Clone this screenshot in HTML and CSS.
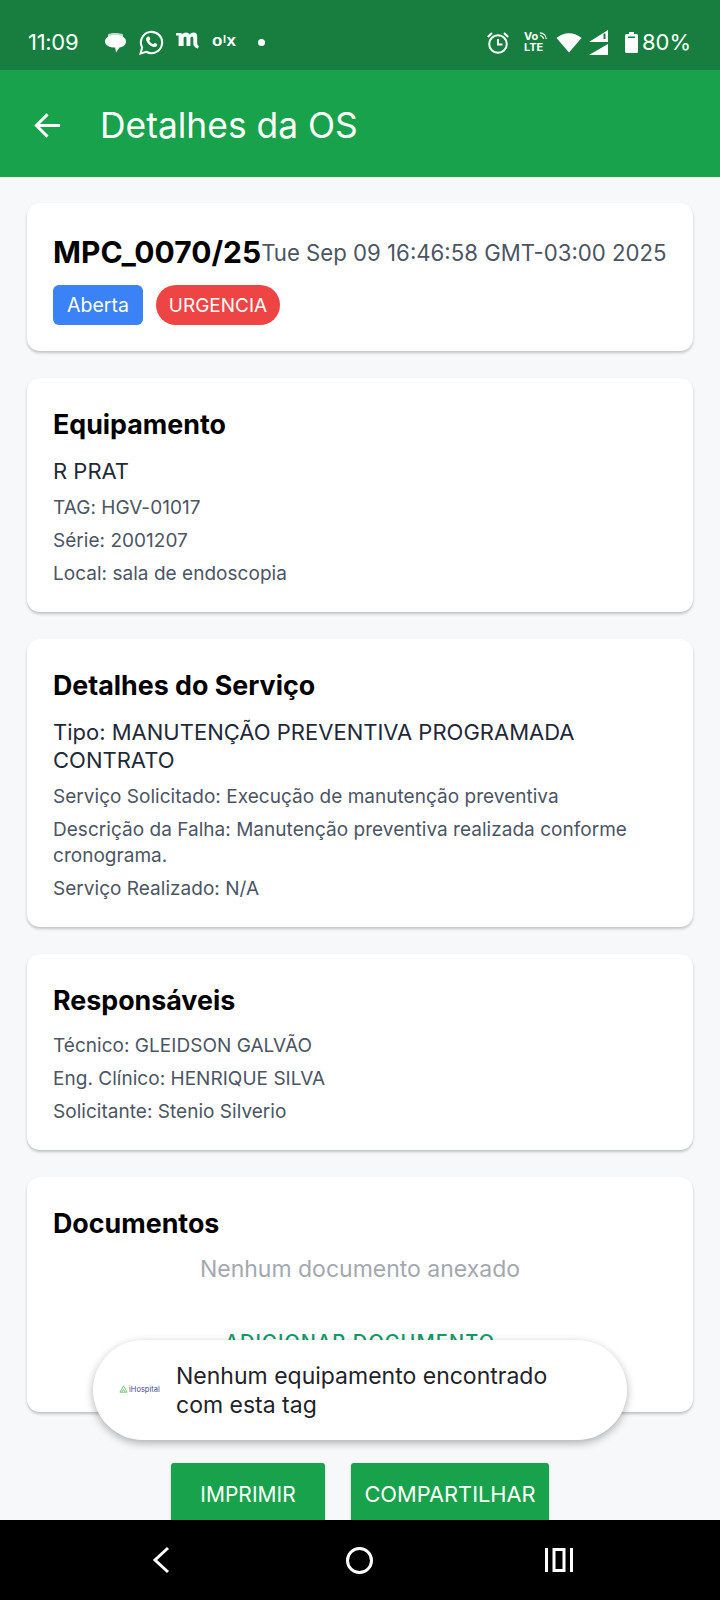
FILE: index.html
```html
<!DOCTYPE html>
<html lang="pt-BR">
<head>
<meta charset="utf-8">
<title>Detalhes da OS</title>
<link rel="stylesheet" href="styles.css">
</head>
<body>
<div class="screen">
  <div class="status">
    <span class="time">11:09</span>
    <div class="notifs">
      <svg class="bubble" viewBox="0 0 21 21"><path fill="#fff" opacity=".75" d="M3 2.500C5 .5 15 .5 18 2.500V5H3z"/><path fill="#fff" d="M10.500 3C16.500 3 21 5.500 21 9.500c0 3.500-3 5.500-6.500 6L11 20.500l-.8-5C5 15.500 0 13.500 0 9.500 0 5.500 4.500 3 10.500 3z"/></svg>
      <svg class="wa" viewBox="0 0 24 24"><path fill="none" stroke="#fff" stroke-width="2" d="M1.500 22.500l1.500-5.700A10.200 10.200 0 1 1 7 20.900z"/><path fill="#fff" d="M8.300 6.500c.5-.5 1.300-.5 1.600 0l.9 2c.1.400-.5 1.200-.9 1.700.9 1.600 2.100 2.800 3.800 3.500.4-.4 1.200-1.400 1.600-1.300l2 1c.4.300.2 1.500-.2 2-.9 1-2.300 1.200-3.900.6-3-1.100-5-3.200-6.100-5.800-.5-1.400-.1-2.800.9-3.700z"/></svg>
      <svg class="mlogo" viewBox="0 0 24 18"><path fill="#fff" d="M1 2h5.500v1.500C7.500 2.500 9.500 1.500 11 1.500c1.700 0 3 .8 3.600 2 1-1.300 2.600-2 4-2 2.500 0 3.600 1.500 3.600 4V12c0 1.500.4 2.500 1.600 3.200L23 17.500c-2.700-.5-4.700-2.200-4.700-5V7.300c0-1-.4-1.600-1.400-1.600s-1.500.6-1.500 1.600V15H11.500V7.300c0-1-.4-1.600-1.400-1.600S8.600 6.300 8.600 7.300V15H3.600V4.500L1 4.500z"/></svg>
      <span class="olx">o<small>l</small>x</span>
      <span class="dot"></span>
    </div>
    <div class="sys">
      <svg class="alarm" viewBox="0 0 22 23"><circle cx="11" cy="13" r="8.800" fill="none" stroke="#fff" stroke-width="2"/><path fill="none" stroke="#fff" stroke-width="2" d="M11 8V13.500H15.500M.8 6L5 2M21.200 6L17 2"/></svg>
      <span class="volte"><span>Vo<svg class="volte-w" viewBox="0 0 10 10"><path fill="none" stroke="#fff" stroke-width="1.300" d="M1 2c4 0 7 3 7 7M1 5c2 0 4 2 4 4"/></svg></span><span>LTE</span></span>
      <svg class="wifi" viewBox="0 0 26 22"><path fill="#fff" d="M13 21.500L.5 7C7.500.5 18.500.5 25.500 7z"/></svg>
      <svg class="signal" viewBox="0 0 19 25"><path fill="#fff" fill-rule="evenodd" d="M0 12L19 0V12zM14.500 3.500V9H16.500V3.500z"/><path fill="#fff" d="M0 25L19 14V25z"/></svg>
      <svg class="batt" viewBox="0 0 13 21"><path fill="#fff" fill-rule="evenodd" d="M4 0h5v2h2.500A1.500 1.500 0 0 1 13 3.500V19.500A1.500 1.500 0 0 1 11.500 21H1.500A1.500 1.500 0 0 1 0 19.500V3.500A1.500 1.500 0 0 1 1.500 2H4zM3 4.500v1.500h7V4.500z"/></svg>
      <span class="pct">80%</span>
    </div>
  </div>
  <header class="appbar">
    <svg class="back" viewBox="0 0 30 30"><path fill="none" stroke="#fff" stroke-width="3" d="M28 15H4M15 3.500L3.500 15 15 26.500"/></svg>
    <h1>Detalhes da OS</h1>
  </header>
  <main class="content">
    <section class="card">
      <div class="head-row">
        <span class="os">MPC_0070/25</span>
        <span class="date">Tue Sep 09 16:46:58 GMT-03:00 2025</span>
      </div>
      <div class="badges">
        <span class="badge blue">Aberta</span>
        <span class="badge red">URGENCIA</span>
      </div>
    </section>
    <section class="card">
      <h2>Equipamento</h2>
      <p class="lead">R PRAT</p>
      <p class="meta">TAG: HGV-01017</p>
      <p class="meta">Série: 2001207</p>
      <p class="meta">Local: sala de endoscopia</p>
    </section>
    <section class="card">
      <h2>Detalhes do Serviço</h2>
      <p class="lead">Tipo: MANUTENÇÃO PREVENTIVA PROGRAMADA CONTRATO</p>
      <p class="meta">Serviço Solicitado: Execução de manutenção preventiva</p>
      <p class="meta">Descrição da Falha: Manutenção preventiva realizada conforme cronograma.</p>
      <p class="meta">Serviço Realizado: N/A</p>
    </section>
    <section class="card">
      <h2>Responsáveis</h2>
      <p class="meta">Técnico: GLEIDSON GALVÃO</p>
      <p class="meta">Eng. Clínico: HENRIQUE SILVA</p>
      <p class="meta">Solicitante: Stenio Silverio</p>
    </section>
    <section class="card docs">
      <h2>Documentos</h2>
      <p class="empty">Nenhum documento anexado</p>
      <p class="add">ADICIONAR DOCUMENTO</p>
    </section>
    <div class="actions">
      <button class="btn print">IMPRIMIR</button>
      <button class="btn share">COMPARTILHAR</button>
    </div>
  </main>
  <nav class="navbar">
    <svg class="nav-back" viewBox="0 0 20 30"><path fill="none" stroke="#fff" stroke-width="3" d="M17 3L4 15l13 12"/></svg>
    <span class="nav-home"></span>
    <svg class="nav-recent" viewBox="0 0 28 26"><path fill="none" stroke="#fff" stroke-width="3" d="M1.500 1v24M26.500 1v24M9 2.500h10v21H9z"/></svg>
  </nav>
  <div class="toast">
    <span class="brand"><svg class="brand-i" viewBox="0 0 10 10"><path fill="none" stroke="#6fbf73" stroke-width="1" d="M5 1L1 8h8zM3 8l2-3 2 3"/></svg><span>iHospital</span></span>
    <span class="toast-text">Nenhum equipamento encontrado com esta tag</span>
  </div>
</div>
</body>
</html>
```
FILE: styles.css
```css
* { box-sizing: border-box; }
html, body { margin: 0; padding: 0; }
body { font-family: Inter, "Liberation Sans", sans-serif; background: #f7f8fa; }
.screen { position: relative; width: 720px; height: 1600px; display: flex; flex-direction: column; overflow: hidden; }
.status { height: 70px; flex: none; background: #177e3f; color: #fff; display: flex; align-items: center; padding: 14px 29px 0 28px; }
.time { font-size: 22px; letter-spacing: -0.3px; width: 77px; }
.notifs { display: flex; align-items: center; gap: 13px; }
.bubble { width: 21px; height: 21px; }
.wa { width: 25px; height: 25px; }
.mlogo { width: 24px; height: 18px; margin: -4px 0 0 -2px; }
.olx { font-family: "Liberation Sans", sans-serif; font-weight: 700; font-size: 17px; letter-spacing: .5px; margin-top: -2px; width: 28px; }
.olx small { font-size: 11px; vertical-align: 3px; }
.dot { width: 7px; height: 7px; background: #fff; border-radius: 50%; margin-left: 5px; }
.sys { margin-left: auto; display: flex; align-items: center; }
.alarm { width: 22px; height: 23px; }
.volte { display: flex; flex-direction: column; font-size: 11px; font-weight: 700; line-height: 11px; margin-left: 15px; width: 32px; }
.volte > span { display: flex; align-items: flex-start; }
.volte-w { width: 9px; height: 9px; margin-left: 1px; }
.wifi { width: 26px; height: 22px; }
.signal { width: 19px; height: 25px; margin-left: 7px; }
.batt { width: 13px; height: 21px; margin-left: 17px; }
.pct { font-size: 22px; margin-left: 4px; }
.appbar { height: 107px; flex: none; background: #18a24b; display: flex; align-items: center; padding: 3px 0 0 33px; }
.back { width: 29px; height: 29px; }
.appbar h1 { margin: 0 0 0 38px; color: #fff; font-size: 35.400px; font-weight: 400; }
.content { flex: 1; min-height: 0; overflow: hidden; padding: 26px 27px 0; display: flex; flex-direction: column; gap: 27px; }
.card { flex: none; background: #fff; border-radius: 13px; padding: 28px 26px 25px; box-shadow: 0 2px 3px rgba(0,0,0,.22); }
.card p { margin: 0; }
.head-row { display: flex; align-items: center; justify-content: space-between; height: 44px; margin-top: -1px; padding-right: 1px; }
.os { font-size: 30px; font-weight: 700; color: #000; white-space: nowrap; }
.date { font-size: 22.200px; color: #4b5563; white-space: nowrap; }
.badges { display: flex; gap: 13px; margin-top: 11px; margin-bottom: 1px; }
.badge { height: 40px; display: flex; align-items: center; color: #fff; font-size: 19px; }
.blue { width: 90px; justify-content: center; background: #3b82f6; border-radius: 6px; font-size: 19.500px; }
.red { width: 124px; justify-content: center; background: #ef4444; border-radius: 20px; }
h2 { margin: 0 0 15px; font-size: 26.800px; line-height: 36px; font-weight: 700; color: #000; }
.lead { font-size: 22px; line-height: 28px; color: #1f2937; }
.card .lead { margin-bottom: 10px; }
.card .meta { font-size: 19px; line-height: 26px; color: #4b5563; margin-bottom: 7px; letter-spacing: .03px; }
.card .meta:last-child { margin-bottom: 0; }
.docs { height: 235px; }
.card .empty { font-size: 23px; line-height: 26px; color: #a3a8b0; text-align: center; margin-top: 2px; }
.card .add { font-size: 20px; line-height: 24px; letter-spacing: 1.100px; color: #12996a; text-align: center; font-weight: 500; margin-top: 48px; }
.actions { display: flex; justify-content: center; gap: 26px; margin-top: 24px; }
.btn { height: 62px; border: 0; border-radius: 3px; background: #18a24b; color: #fff; font: 400 21px Inter, "Liberation Sans", sans-serif; padding: 0; box-shadow: 0 1px 3px rgba(0,0,0,.2); flex: none; }
.print { width: 154px; }
.share { width: 198px; font-size: 21.800px; }
.navbar { height: 80px; flex: none; background: #000; display: flex; align-items: center; position: relative; z-index: 2; padding: 0 147px 0 151px; justify-content: space-between; }
.nav-back { width: 20px; height: 30px; }
.nav-home { width: 27px; height: 27px; border: 3px solid #fff; border-radius: 50%; margin-left: 2px; }
.nav-recent { width: 28px; height: 26px; }
.toast { position: absolute; left: 93px; top: 1340px; width: 534px; height: 100px; border-radius: 50px; background: #fff; box-shadow: 0 3px 8px rgba(0,0,0,.3); display: flex; align-items: center; padding: 2px 60px 0 26px; z-index: 3; }
.brand { width: 57px; flex: none; display: flex; align-items: center; font-size: 7.500px; color: #4a4a8a; margin-top: -3px; }
.brand-i { width: 9px; height: 9px; margin-right: 1px; }
.toast-text { font-size: 23px; line-height: 29px; color: #1f2329; }
```
